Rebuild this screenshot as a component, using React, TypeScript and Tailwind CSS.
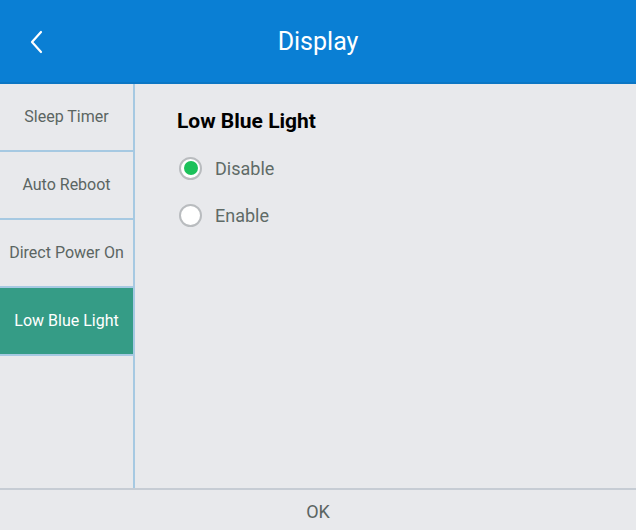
import React, { useState } from "react";

const ITEMS = ["Sleep Timer", "Auto Reboot", "Direct Power On", "Low Blue Light"];

function Radio({ checked, label, onClick }: { checked: boolean; label: string; onClick: () => void }) {
  return (
    <button onClick={onClick} className="flex h-[47px] items-center gap-[13px] pl-[2px] text-left">
      <span className="flex h-[23px] w-[23px] items-center justify-center rounded-full border-2 border-[#b9bcbf] bg-white">
        {checked && <span className="h-[14px] w-[14px] rounded-full bg-[#1cc15a]" />}
      </span>
      <span className="text-[18px] text-[#5f6b67]">{label}</span>
    </button>
  );
}

export default function App() {
  const [active, setActive] = useState("Low Blue Light");
  const [enabled, setEnabled] = useState(false);

  return (
    <div className="flex h-[530px] w-[636px] flex-col bg-[#e8e9ec] font-['Roboto',sans-serif]">
      <header className="relative flex h-[84px] shrink-0 items-center justify-center border-b-2 border-[#0b76c4] bg-[#0a7fd4]">
        <svg className="absolute left-[29px] top-[30px]" width="16" height="24" viewBox="0 0 16 24" fill="none">
          <path d="M12 2 L3 12 L12 22" stroke="white" strokeWidth="2.2" strokeLinecap="round" strokeLinejoin="round" />
        </svg>
        <h1 className="pt-[2px] text-[25px] text-white">Display</h1>
      </header>

      <div className="flex min-h-0 flex-1">
        <aside className="flex w-[135px] shrink-0 flex-col border-r-2 border-[#a6c9e2]">
          {ITEMS.map((item) => {
            const on = item === active;
            return (
              <button
                key={item}
                onClick={() => setActive(item)}
                className={
                  on
                    ? "flex h-[68px] shrink-0 items-center justify-center border-b-2 border-[#a6c9e2] bg-[#359c86] text-[16px] text-white"
                    : "flex h-[68px] shrink-0 items-center justify-center border-b-2 border-[#a6c9e2] text-[16px] text-[#5b6562]"
                }
              >
                {item}
              </button>
            );
          })}
        </aside>

        <main className="flex-1 pl-[42px] pt-[22px]">
          <h2 className="text-[21px] font-bold text-black">Low Blue Light</h2>
          <div className="mt-[7px] flex flex-col">
            <Radio checked={!enabled} label="Disable" onClick={() => setEnabled(false)} />
            <Radio checked={enabled} label="Enable" onClick={() => setEnabled(true)} />
          </div>
        </main>
      </div>

      <footer className="flex h-[42px] shrink-0 items-center justify-center border-t-2 border-[#c6ccd4]">
        <span className="pt-[2px] text-[18px] text-[#5b6562]">OK</span>
      </footer>
    </div>
  );
}
